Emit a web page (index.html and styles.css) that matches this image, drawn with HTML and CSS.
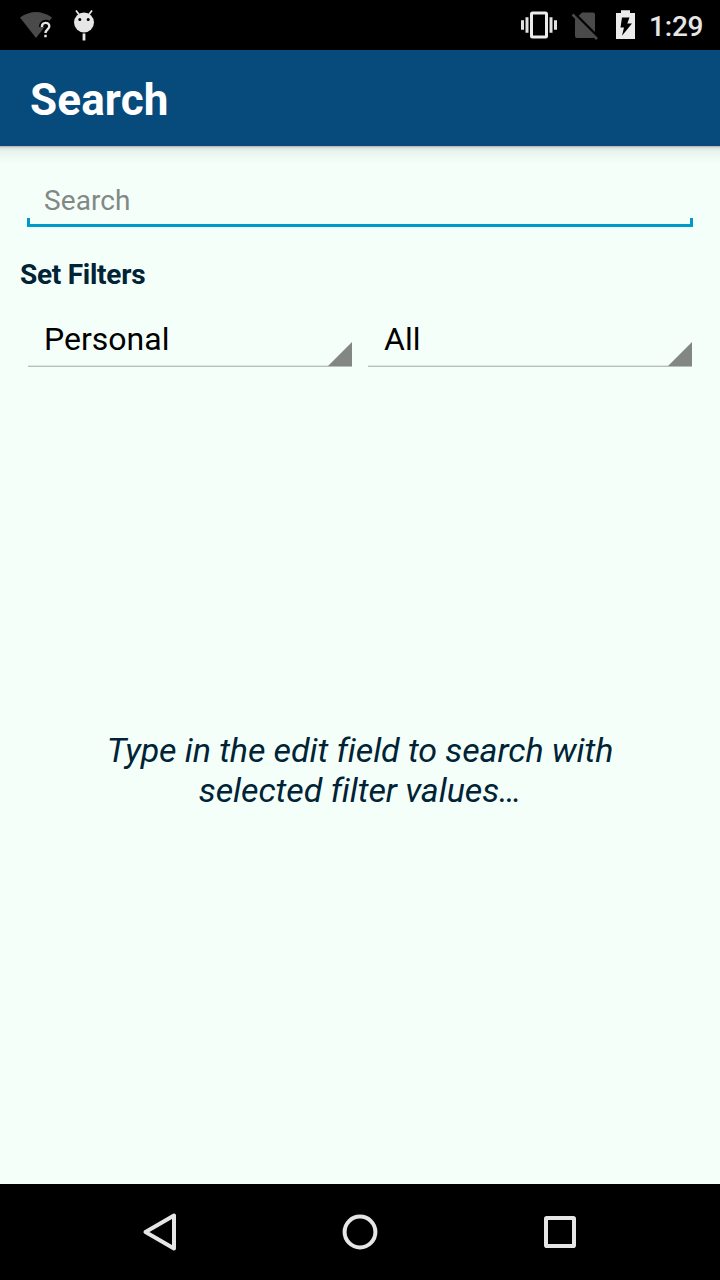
FILE: index.html
```html
<!DOCTYPE html>
<html lang="en">
<head>
<meta charset="utf-8">
<title>Search</title>
<link rel="stylesheet" href="styles.css">
</head>
<body>
<div class="screen">
  <div class="status-bar">
    <svg class="status-left" width="100" height="50" viewBox="0 0 100 50">
      <path d="M20 17.5Q36 6.5 52 17.5L36 38Z" fill="#4a4a4a"/>
      <path d="M41.9 27C41.9 21.6 49.3 21.6 49.3 26.2C49.3 29.3 45.5 29.4 45.5 33M45.5 34.8V37.2" fill="none" stroke="#000" stroke-width="6"/>
      <path d="M41.9 27C41.9 21.6 49.3 21.6 49.3 26.2C49.3 29.3 45.5 29.4 45.5 33M45.5 34.8V37.2" fill="none" stroke="#e6e6e6" stroke-width="2.4"/>
      <path d="M76 10.5L79 14.5M92 10.5L89 14.5" stroke="#e6e6e6" stroke-width="1.8"/>
      <circle cx="84" cy="22.5" r="10" fill="#e6e6e6"/>
      <circle cx="79.8" cy="19.5" r="1.5" fill="#000"/>
      <circle cx="88.2" cy="19.5" r="1.5" fill="#000"/>
      <path d="M82.6 33.5h2.8v7h-2.8z" fill="#e6e6e6"/>
    </svg>
    <div class="status-right">
      <svg width="126" height="50" viewBox="516 0 126 50">
        <rect x="531.5" y="12.9" width="15" height="24.2" rx="1" fill="none" stroke="#ececec" stroke-width="3"/>
        <path d="M525.5 17.3h3v15.4h-3zM521 20.2h3v9.6h-3zM549.5 17.3h3v15.4h-3zM554 20.2h3v9.6h-3z" fill="#e2e2e2"/>
        <path d="M582 12.5h11a2 2 0 0 1 2 2V36a2 2 0 0 1-2 2H577a2 2 0 0 1-2-2V19.5z" fill="#4a4a4a"/>
        <path d="M574 13L599 38" stroke="#000" stroke-width="2.6"/>
        <path d="M572.5 14.5L597 39" stroke="#4a4a4a" stroke-width="2.5"/>
        <path d="M621 10.3h9v2.6h5v26h-19v-26h5z" fill="#ececec"/>
        <path d="M622 17.5h7.5l-2.2 6h4.7l-10 12.3 2-8.3h-3.5z" fill="#000"/>
      </svg>
      <span class="clock">1:29</span>
    </div>
  </div>
  <header class="app-bar"><h1 class="title">Search</h1></header>
  <main class="content">
    <div class="search-field"><span class="placeholder">Search</span></div>
    <h2 class="filters-label">Set Filters</h2>
    <div class="filters">
      <div class="spinner">
        <span>Personal</span>
        <svg class="arrow" width="24" height="24" viewBox="0 0 24 24"><path d="M24 0V24H0Z"/></svg>
      </div>
      <div class="spinner">
        <span>All</span>
        <svg class="arrow" width="24" height="24" viewBox="0 0 24 24"><path d="M24 0V24H0Z"/></svg>
      </div>
    </div>
    <p class="hint">Type in the edit field to search with<br>selected filter values…</p>
  </main>
  <nav class="nav-bar">
    <svg width="40" height="40" viewBox="140 1212 40 40"><path d="M145.5 1232L174 1215.5V1248.5Z" fill="none" stroke="#e6e6e6" stroke-width="4" stroke-linejoin="round"/></svg>
    <svg width="40" height="40" viewBox="0 0 40 40"><circle cx="20" cy="20" r="15.4" fill="none" stroke="#e6e6e6" stroke-width="4"/></svg>
    <svg width="40" height="40" viewBox="0 0 40 40"><rect x="6" y="6" width="28" height="28" rx=".8" fill="none" stroke="#e6e6e6" stroke-width="4"/></svg>
  </nav>
</div>
</body>
</html>
```
FILE: styles.css
```css
* { box-sizing: border-box; margin: 0; padding: 0; }
body { font-family: Roboto, sans-serif; background: #f5fffa; }
svg { display: block; }
.screen { width: 720px; height: 1280px; display: flex; flex-direction: column; overflow: hidden; }
.status-bar { height: 50px; background: #000; display: flex; justify-content: space-between; flex: none; }
.status-right { display: flex; width: 204px; }
.clock { color: #e6e6e6; font-size: 28px; font-weight: 500; line-height: 54px; height: 50px; padding-left: 7px; letter-spacing: -0.2px; }
.app-bar { height: 96px; background: #074b7d; flex: none; display: flex; align-items: center; padding: 4px 30px 0; }
.title { color: #fff; font-size: 44px; font-weight: 700; line-height: 52px; letter-spacing: 0.15px; }
.content {
  flex: 1; display: flex; flex-direction: column; min-height: 0;
  padding: 34px 20px 0;
  background: linear-gradient(to bottom, #a9b1ae 0, #dde7e2 2px, #e8f2ed 5px, #f0faf5 11px, #f5fffa 18px);
}
.search-field {
  height: 47px; margin: 0 7px; padding: 0 17px;
  background:
    linear-gradient(#0099cc, #0099cc) left bottom / 3px 9px no-repeat,
    linear-gradient(#0099cc, #0099cc) right bottom / 3px 9px no-repeat,
    linear-gradient(#0099cc, #0099cc) left bottom / 100% 3px no-repeat;
}
.placeholder { display: block; color: #838885; font-size: 28px; line-height: 42px; letter-spacing: 0.1px; }
.filters-label { color: #002336; font-size: 28px; font-weight: 700; line-height: 34px; margin-top: 31px; letter-spacing: -0.27px; }
.filters { display: grid; grid-template-columns: 1fr 1fr; gap: 16px; margin: 24px 8px 0; }
.spinner {
  height: 51px; padding: 0 0 1px 16px; color: #000; font-size: 32px; line-height: 46px;
  display: flex; justify-content: space-between; align-items: flex-end;
  background: linear-gradient(#dfe8e4 50%, #b7bfbb 50%) left bottom / 100% 2px no-repeat;
}
.spinner span { align-self: flex-start; }
.arrow { fill: #828784; }
.hint {
  color: #002336; font-size: 34px; font-style: italic; line-height: 40px; text-align: center;
  margin: auto; padding-bottom: 12px; letter-spacing: -0.08px; font-variant-ligatures: common-ligatures;
}
.nav-bar { height: 96px; background: #000; flex: none; display: flex; justify-content: center; align-items: center; gap: 160px; }
```
